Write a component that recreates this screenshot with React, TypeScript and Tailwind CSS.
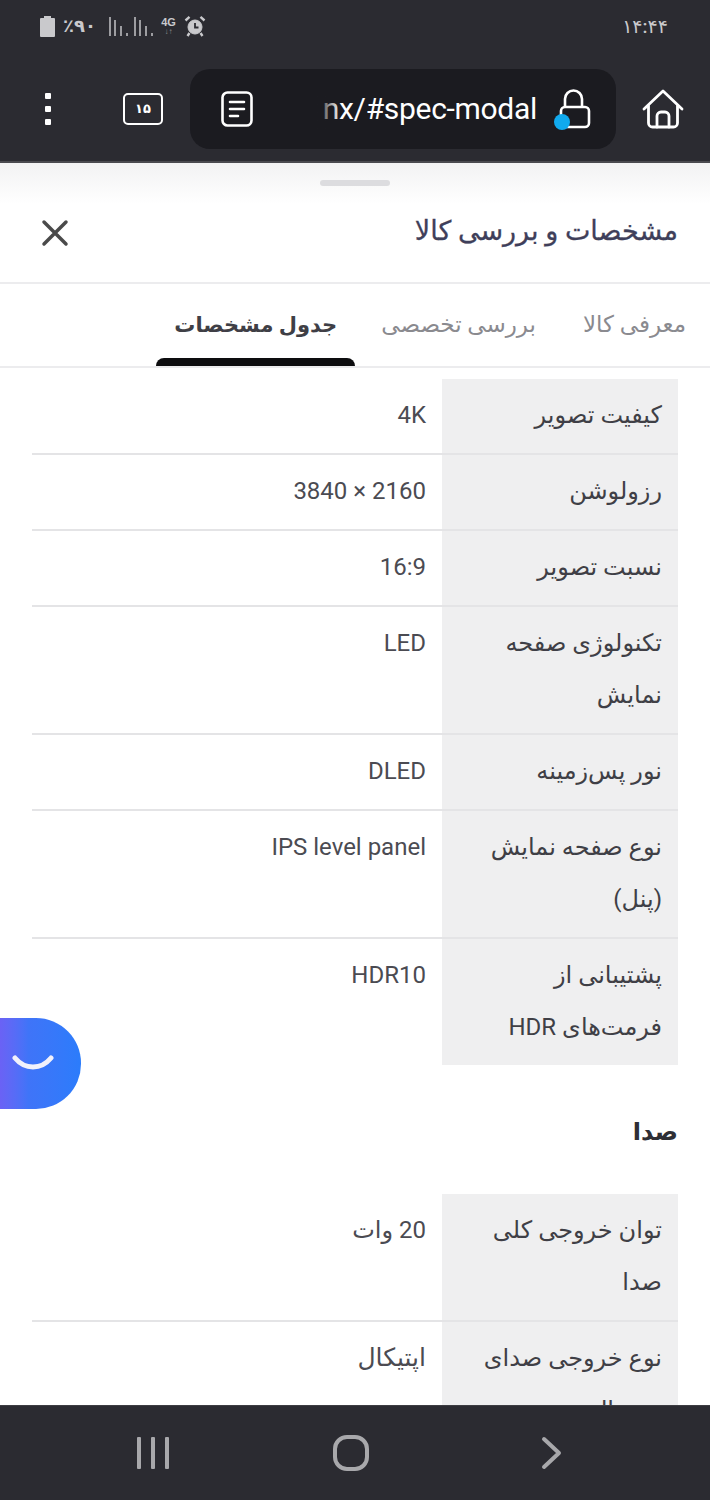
const fa = "font-['Roboto','DejaVu_Sans',sans-serif]";

const specs = [
  { label: 'کیفیت تصویر', value: '4K' },
  { label: 'رزولوشن', value: '2160 × 3840' },
  { label: 'نسبت تصویر', value: '16:9' },
  { label: 'تکنولوژی صفحه نمایش', value: 'LED' },
  { label: 'نور پس‌زمینه', value: 'DLED' },
  { label: 'نوع صفحه نمایش (پنل)', value: 'IPS level panel' },
  { label: 'پشتیبانی از فرمت‌های HDR', value: 'HDR10' },
];

const audio = [
  { label: 'توان خروجی کلی صدا', value: '20 وات' },
  { label: 'نوع خروجی صدای دیجیتال', value: 'اپتیکال', large: true },
];

const SpecRow = ({ label, value, last, large }: { label: string; value: string; last?: boolean; large?: boolean }) => (
  <div className={`flex ${last ? '' : 'border-b-2 border-[#e4e4e6]'}`}>
    <div className="w-[236px] shrink-0 bg-[#efeff0] pt-[10px] pb-[12px] pr-[16px] pl-[12px] text-[24px] leading-[52px] text-[#3f3f46]">
      {label}
    </div>
    <div className={`flex-1 pt-[10px] pr-[16px] leading-[52px] text-[#4b4b52] ${large ? 'text-[25px]' : 'text-[24px]'}`}>{value}</div>
  </div>
);

const StatusBar = () => (
  <div className="flex h-[52px] items-center justify-between pl-[40px] pr-[42px] text-[#c9c9cc]">
    <div className="flex items-center gap-[8px]">
      <svg width="15" height="21" viewBox="0 0 15 21">
        <path d="M4 0h7v2h3a1 1 0 0 1 1 1v17a1 1 0 0 1-1 1H1a1 1 0 0 1-1-1V3a1 1 0 0 1 1-1h3z" fill="#c9c9cc" />
      </svg>
      <span className="mr-[5px] text-[18px] font-bold leading-none" dir="rtl">٪۹۰</span>
      <svg width="44" height="20" viewBox="0 0 44 20" fill="#9d9da1">
        <rect x="0" y="1" width="2" height="19" />
        <rect x="5" y="4" width="2" height="16" />
        <rect x="11" y="10" width="2" height="10" />
        <rect x="17" y="17" width="2" height="3" />
        <rect x="25" y="1" width="2" height="19" />
        <rect x="30" y="4" width="2" height="16" />
        <rect x="36" y="10" width="2" height="10" />
        <rect x="42" y="17" width="2" height="3" />
      </svg>
      <div className="flex w-[15px] flex-col items-center font-['Liberation_Sans',sans-serif] leading-none">
        <span className="text-[11px] font-bold">4G</span>
        <span className="text-[8px] text-[#8d8d91]">↓↑</span>
      </div>
      <svg width="22" height="22" viewBox="0 0 22 22" fill="none" stroke="#c9c9cc">
        <circle cx="11" cy="12" r="7" fill="#c9c9cc" />
        <path d="M11 8v4.5h3.5" stroke="#2b2b31" strokeWidth="1.8" />
        <path d="M1.500 5.500 5.500 1.800M20.500 5.500l-4-3.700M5.500 18l-2 3M16.500 18l2 3" strokeWidth="2.4" />
      </svg>
    </div>
    <span className="text-[19px] font-medium leading-none" dir="rtl">۱۴:۴۴</span>
  </div>
);

const BrowserBar = () => (
  <div className="flex h-[111px] items-start border-b-[2px] border-[#4a4a4f] bg-[#2b2b31]">
    <div className="mt-[17px] flex h-[80px] w-full items-center">
      <div className="w-[123px] pl-[45px]">
        <svg className="block" width="6" height="32" viewBox="0 0 6 32" fill="#fff">
          <rect width="6" height="6" y="0" rx="1" />
          <rect width="6" height="6" y="13" rx="1" />
          <rect width="6" height="6" y="26" rx="1" />
        </svg>
      </div>
      <div className="flex h-[32px] w-[40px] items-center justify-center rounded-[5px] border-[2.5px] border-white text-[13px] font-bold text-white">
        ۱۵
      </div>
      <div className="ml-[27px] flex h-[80px] w-[426px] items-center rounded-[20px] bg-[#1b1b20] pl-[31px]">
        <svg className="shrink-0" width="32" height="36" viewBox="0 0 32 36" fill="none" stroke="#fff" strokeWidth="2.6" strokeLinecap="round">
          <rect x="1.500" y="1.500" width="29" height="33" rx="5" />
          <path d="M9 11h14M9 18h14M9 25h8" />
        </svg>
        <div className="relative ml-[62px] flex h-[40px] w-[222px] shrink-0 items-center justify-end overflow-hidden">
          <span className="whitespace-nowrap font-['Roboto',sans-serif] text-[30px] leading-none tracking-[-0.3px] text-white">
            nx/#spec-modal
          </span>
          <div className="absolute left-0 top-0 h-full w-[26px] bg-gradient-to-r from-[#1b1b20] to-transparent" />
        </div>
        <svg className="ml-[17px] shrink-0" width="38" height="42" viewBox="0 0 38 42" fill="none">
          <path d="M11 19v-8a8.500 8.500 0 0 1 17 0v8" stroke="#fff" strokeWidth="2.6" />
          <rect x="7" y="19" width="28" height="20" rx="4" stroke="#fff" strokeWidth="2.6" />
          <circle cx="8" cy="34" r="8" fill="#11aaee" />
        </svg>
      </div>
      <div className="pl-[26px]">
        <svg className="block" width="42" height="40" viewBox="0 0 42 40" fill="none" stroke="#fff" strokeWidth="2.800" strokeLinejoin="round" strokeLinecap="round">
          <path d="M2 20 21 2l19 18" />
          <path d="M6.500 17v17a4 4 0 0 0 4 4h21a4 4 0 0 0 4-4V17" />
          <path d="M15 38V27a4 4 0 0 1 4-4h4a4 4 0 0 1 4 4v11" />
        </svg>
      </div>
    </div>
  </div>
);

export default function App() {
  return (
    <div className={`relative flex h-[1500px] w-[710px] flex-col overflow-hidden bg-white ${fa}`}>
      <div className="bg-[#2b2b31]">
        <StatusBar />
        <BrowserBar />
      </div>

      <div className="min-h-0 flex-1 overflow-hidden" dir="rtl">
        <div className="flex h-[41px] items-start justify-center bg-gradient-to-b from-[#f2f2f3] to-white pt-[17px]">
          <div className="h-[6px] w-[70px] rounded-full bg-[#dcdcdf]" />
        </div>
        <div className="flex h-[80px] items-start justify-between border-b-2 border-[#ececee] pl-[41px] pr-[32px] pt-[7px]">
          <h1 className="text-[27px] font-normal leading-[40px] text-[#3f3f5a] [-webkit-text-stroke:0.3px_#3f3f5a]">مشخصات و بررسی کالا</h1>
          <svg className="mt-[8px]" width="28" height="28" viewBox="0 0 28 28" stroke="#4a4a4a" strokeWidth="3.500" strokeLinecap="round">
            <path d="M3 3l22 22M25 3 3 25" />
          </svg>
        </div>
        <div className="flex h-[84px] border-b-2 border-[#ececee] pr-[24px] text-[23px]">
          <div className="pl-[47px] pt-[24px] leading-[34px] text-[#8a8a8f]">معرفی کالا</div>
          <div className="pt-[24px] leading-[34px] text-[#8a8a8f]">بررسی تخصصی</div>
          <div className="relative mr-[26px] w-[199px] pt-[24px] text-center text-[21px] font-bold leading-[34px] text-[#3f3f46]">
            جدول مشخصات
            <div className="absolute bottom-0 left-0 right-0 h-[8px] rounded-t-[8px] bg-[#0d0d0f]" />
          </div>
        </div>

        <div className="px-[32px] pt-[11px]">
          {specs.map((s, i) => (
            <SpecRow key={s.label} label={s.label} value={s.value} last={i === specs.length - 1} />
          ))}
          <h2 className="pb-[41px] pt-[46px] text-[24px] font-bold leading-[42px] text-[#2f2f35]">صدا</h2>
          {audio.map((s, i) => (
            <SpecRow key={s.label} label={s.label} value={s.value} large={s.large} last={i === audio.length - 1} />
          ))}
        </div>
      </div>

      <div className="flex h-[95px] shrink-0 items-center border-t border-[#3d3d42] bg-[#2b2b31]">
        <div className="flex w-[306px] justify-center">
          <svg width="32" height="32" viewBox="0 0 32 32" fill="#a8a8ab">
            <rect x="0" y="0" width="4" height="32" rx="1" />
            <rect x="14" y="0" width="4" height="32" rx="1" />
            <rect x="28" y="0" width="4" height="32" rx="1" />
          </svg>
        </div>
        <div className="flex w-[90px] justify-center">
          <svg width="36" height="36" viewBox="0 0 36 36" fill="none" stroke="#a8a8ab" strokeWidth="4">
            <rect x="2" y="2" width="32" height="32" rx="12" />
          </svg>
        </div>
        <div className="flex w-[312px] justify-center">
          <svg width="22" height="34" viewBox="0 0 22 34" fill="none" stroke="#a8a8ab" strokeWidth="4" strokeLinecap="round" strokeLinejoin="round">
            <path d="M3 3l15 14L3 31" />
          </svg>
        </div>
      </div>

      {/* chat launcher */}
      <div className="absolute left-0 top-[1018px] flex h-[91px] w-[81px] items-center justify-center rounded-r-[45px] bg-gradient-to-r from-[#6a62f5] via-[#3f74f8] via-35% to-[#2b7cfb]">
        <svg className="mr-[15px] mt-[-1px]" width="42" height="18" viewBox="0 0 42 18" fill="none" stroke="#f2f1fb" strokeWidth="5" strokeLinecap="round">
          <path d="M3 4c5 6 11 9 18 9s13-3 18-9" />
        </svg>
      </div>
    </div>
  );
}
